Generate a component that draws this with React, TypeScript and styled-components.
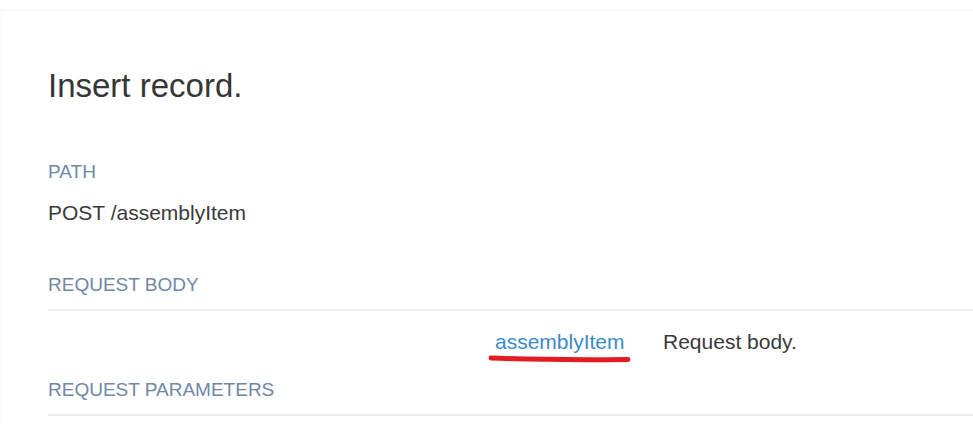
import React from 'react';
import styled, { createGlobalStyle } from 'styled-components';

const GlobalStyle = createGlobalStyle`
  html, body {
    margin: 0;
    padding: 0;
    background: #fff;
  }
  body {
    font-family: "Liberation Sans", Arial, sans-serif;
  }
`;

const Page = styled.div`
  padding-top: 10px;
  min-height: 100vh;
  box-sizing: border-box;
`;

const Frame = styled.div`
  border-top: 1px solid #f6f6f6;
  border-left: 1px solid #f8f8f8;
  padding: 0 0 0 47px;
  min-height: 413px;
  box-sizing: border-box;
`;

const Title = styled.h1`
  margin: 55px 0 0;
  font-size: 33px;
  line-height: 40px;
  font-weight: 400;
  color: #363636;
`;

const Label = styled.div<{ $gap: number }>`
  margin-top: ${(p) => p.$gap}px;
  font-size: 19px;
  line-height: 24px;
  color: #6f87a8;
  text-transform: uppercase;
`;

const PathText = styled.div`
  margin-top: 16px;
  font-size: 21px;
  line-height: 26px;
  color: #3a3a3a;
`;

const Divider = styled.div`
  margin-top: 12px;
  border-top: 2px solid #ececec;
`;

const BodyRow = styled.div`
  display: grid;
  grid-template-columns: 447px 168px 1fr;
  margin-top: 18px;
  font-size: 21px;
  line-height: 26px;
`;

const TypeCell = styled.div`
  color: #3a8bc8;
`;

const Marked = styled.span`
  position: relative;
  display: inline-block;
`;

const Underline = styled.svg`
  position: absolute;
  left: -7px;
  top: 24px;
`;

const DescCell = styled.div`
  color: #3a3a3a;
`;

const App: React.FC = () => {
  return (
    <Page>
      <GlobalStyle />
      <Frame>
        <Title>Insert record.</Title>

        <Label $gap={54}>Path</Label>
        <PathText>POST /assemblyItem</PathText>

        <Label $gap={47}>Request body</Label>
        <Divider />
        <BodyRow>
          <div />
          <TypeCell>
            <Marked>
              assemblyItem
              <Underline width="144" height="11" viewBox="0 0 144 11">
                <path
                  d="M3 5 C 40 6.5, 100 7, 140 6.5"
                  stroke="#e31b23"
                  strokeWidth="5"
                  strokeLinecap="round"
                  fill="none"
                />
              </Underline>
            </Marked>
          </TypeCell>
          <DescCell>Request body.</DescCell>
        </BodyRow>

        <Label $gap={23}>Request parameters</Label>
        <Divider />
      </Frame>
    </Page>
  );
};

export default App;
